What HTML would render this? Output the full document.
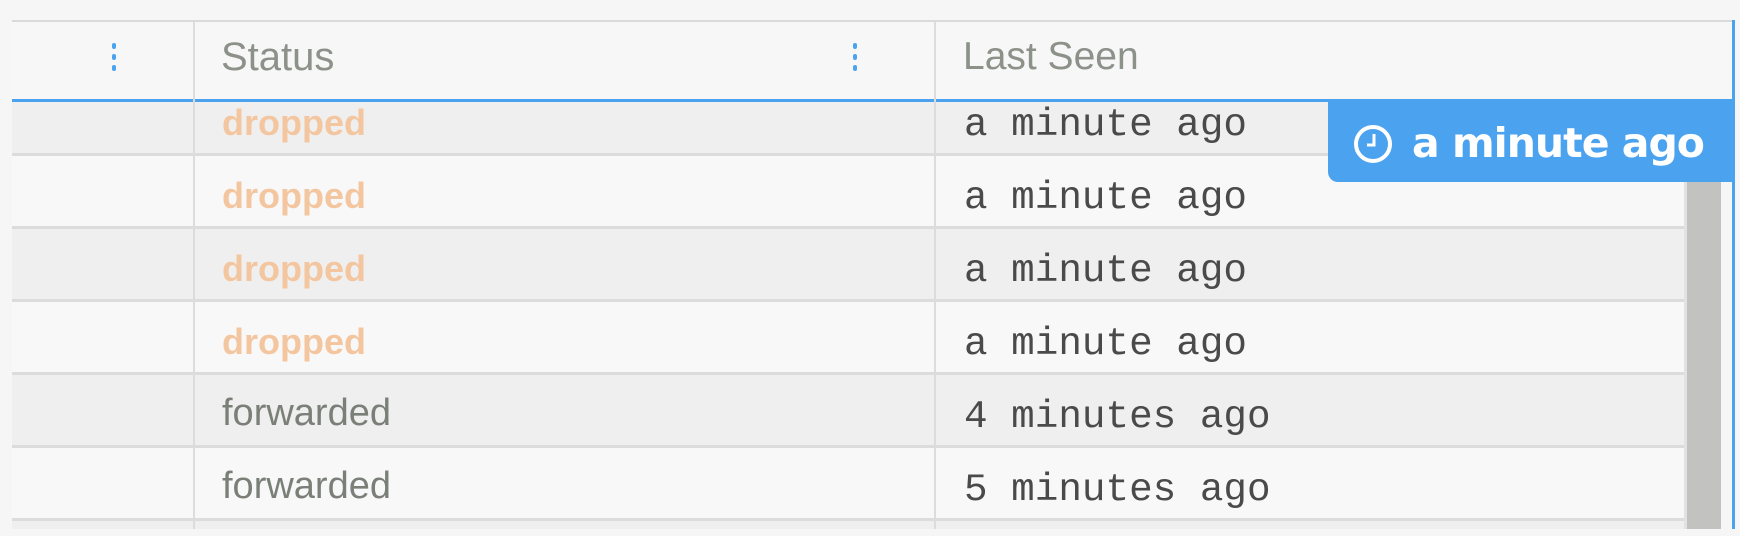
<!DOCTYPE html><html><head><style>
body{margin:0;width:1740px;height:536px;background:#f6f6f6;position:relative;overflow:hidden;font-family:"Liberation Sans",sans-serif}
.a{position:absolute}
.row{position:absolute;left:12px;width:1672px;height:73px;border-bottom:3px solid #dcdcdc;box-sizing:border-box}
.st{position:absolute;left:210px}
.ls{position:absolute;left:952px;font-family:"Liberation Mono",monospace;font-size:39.3px;color:#4a4a4a}
.dr{color:#f3c6a0;font-weight:bold;font-size:36px}
.fw{color:#7a7f78;font-size:38px}
.dots{position:absolute;width:4px}
.dots i{display:block;width:4px;height:6px;background:#4ba3f0;border-radius:2px;margin-bottom:5px}
</style></head><body>
<div class="a" style="left:12px;top:20px;width:1722px;height:80px;background:#f7f7f7;border-top:2px solid #dadada"></div>
<div class="a" style="left:12px;top:99px;width:1722px;height:3px;background:#4ba3f0"></div>
<div class="a" style="left:221px;top:35px;font-size:40px;color:#8c918a">Status</div>
<div class="a" style="left:963px;top:35px;font-size:39px;color:#8c918a">Last Seen</div>
<div class="dots" style="left:112px;top:43px"><i></i><i></i><i></i></div>
<div class="dots" style="left:853px;top:43px"><i></i><i></i><i></i></div>
<div class="row" style="top:102px;height:54px;background:#efefef"><span class="st dr" style="top:0px">dropped</span><span class="ls" style="top:0px">a minute ago</span></div>
<div class="row" style="top:156px;background:#f8f8f8"><span class="st dr" style="top:19px">dropped</span><span class="ls" style="top:19px">a minute ago</span></div>
<div class="row" style="top:229px;background:#efefef"><span class="st dr" style="top:19px">dropped</span><span class="ls" style="top:19px">a minute ago</span></div>
<div class="row" style="top:302px;background:#f8f8f8"><span class="st dr" style="top:19px">dropped</span><span class="ls" style="top:19px">a minute ago</span></div>
<div class="row" style="top:375px;background:#efefef"><span class="st fw" style="top:17px">forwarded</span><span class="ls" style="top:19px">4 minutes ago</span></div>
<div class="row" style="top:448px;background:#f8f8f8"><span class="st fw" style="top:17px">forwarded</span><span class="ls" style="top:19px">5 minutes ago</span></div>
<div class="a" style="left:12px;top:521px;width:1672px;height:8px;background:#efefef"></div>
<div class="a" style="left:193px;top:22px;width:2px;height:507px;background:#dcdcdc"></div>
<div class="a" style="left:934px;top:22px;width:2px;height:507px;background:#dcdcdc"></div>
<div class="a" style="left:1684px;top:100px;width:34px;height:429px;background:#c2c3c0;border-left:3px solid #e2e2e2"></div>
<div class="a" style="left:1732px;top:20px;width:3px;height:509px;background:#4ba3f0"></div>
<div class="a" style="left:1328px;top:100px;width:407px;height:82px;background:#4ba3f0;border-bottom-left-radius:10px"></div>
<svg class="a" style="left:1351px;top:122px" width="44" height="44" viewBox="0 0 44 44"><circle cx="22" cy="22" r="17" fill="none" stroke="#fff" stroke-width="4"/><path d="M23 12V23H16" fill="none" stroke="#fff" stroke-width="3"/></svg>
<div class="a" style="left:1412px;top:119px;font-size:41px;font-weight:bold;color:#fff;font-family:'DejaVu Sans',sans-serif;letter-spacing:-1px">a minute ago</div>
</body></html>
